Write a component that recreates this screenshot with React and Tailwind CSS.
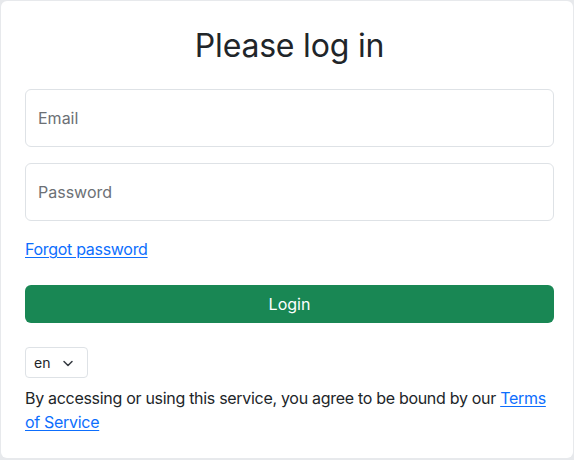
import React from "react";

export default function App() {
  return (
    <div className="min-h-[460px] w-[574px] bg-[#e7e9ec] pt-px pl-px" style={{ fontFamily: "Inter, 'Noto Sans', sans-serif" }}>
      <div className="w-[572px] h-[457px] bg-white rounded-[6px] pl-6 pr-[19px] pt-[26px] text-[#212529]">
        <h3 className="text-[32px] leading-[38px] font-normal text-center mb-6 tracking-[-0.2px]">Please log in</h3>
        <div className="h-[58px] rounded-[6px] border border-[#dee2e6] flex items-center pl-3 text-[16px] text-[#6c7075] mb-4">Email</div>
        <div className="h-[58px] rounded-[6px] border border-[#dee2e6] flex items-center pl-3 text-[16px] text-[#6c7075] mb-4">Password</div>
        <div className="h-6 leading-6 text-[16px] mb-6 tracking-[-0.3px]">
          <a href="#" className="text-[#0d6efd] underline underline-offset-2 decoration-1">Forgot password</a>
        </div>
        <button className="w-full h-[38px] rounded-[6px] bg-[#198754] text-white text-[16px] mb-6 block">Login</button>
        <div className="w-[63px] h-[31px] rounded-[4px] border border-[#dee2e6] flex items-center pl-2 text-[14px] gap-[12px] mb-2">
          <span>en</span>
          <svg width="12" height="10" viewBox="0 0 12 10" fill="none" stroke="#343a40" strokeWidth="1.5" strokeLinecap="round" strokeLinejoin="round">
            <path d="M2 3.5 6 7.5 10 3.5" />
          </svg>
        </div>
        <p className="text-[16px] leading-6 tracking-[-0.3px]">
          By accessing or using this service, you agree to be bound by our{" "}
          <a href="#" className="text-[#0d6efd] underline underline-offset-2 decoration-1">Terms of Service</a>
        </p>
      </div>
    </div>
  );
}
